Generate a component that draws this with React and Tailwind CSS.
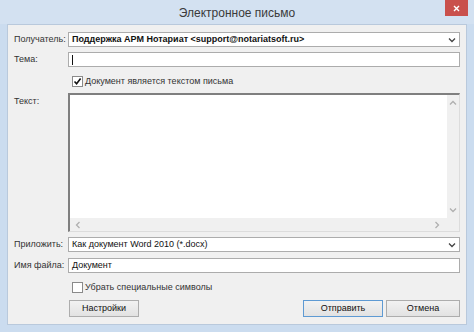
import React from 'react';

const font = { fontFamily: '"Liberation Sans", Arial, sans-serif' };

const Chevron = ({ dir = 'down', className = '' }) => {
  const d = {
    down: 'M1 2.5 L4 5.5 L7 2.5',
    up: 'M1 5.5 L4 2.5 L7 5.5',
    left: 'M5.5 1 L2.5 4 L5.5 7',
    right: 'M2.5 1 L5.5 4 L2.5 7',
  }[dir];
  return (
    <svg width="8" height="8" viewBox="0 0 8 8" className={className}>
      <path d={d} fill="none" stroke="currentColor" strokeWidth="1.3" />
    </svg>
  );
};

const Label = ({ children, top }) => (
  <div className={`w-[54px] shrink-0 text-[9px] text-[#333] ${top ? 'pt-[2px]' : 'flex items-center'}`}>
    {children}
  </div>
);

const Combo = ({ children, bold }) => (
  <div className="flex-1 h-[15px] bg-white border border-[#acacac] flex items-center pl-[3px] pr-[3px]">
    <span className={`flex-1 text-[9px] text-[#111] ${bold ? 'font-bold' : ''}`}>{children}</span>
    <Chevron className="text-[#444]" />
  </div>
);

const Checkbox = ({ checked, label }) => (
  <div className="flex items-center h-[11px] ml-[58px] gap-[2px]">
    <div className="w-[11px] h-[11px] bg-white border border-[#8a8a8a] flex items-center justify-center">
      {checked && (
        <svg width="9" height="9" viewBox="0 0 9 9">
          <path d="M1.5 4.5 L3.6 6.8 L7.6 1.6" fill="none" stroke="#111" strokeWidth="1.6" />
        </svg>
      )}
    </div>
    <span className="text-[9px] text-[#333]">{label}</span>
  </div>
);

const Button = ({ children, primary, className = '' }) => (
  <div
    className={`h-[17px] flex items-center justify-center text-[9px] text-[#111] bg-gradient-to-b from-[#f2f2f2] to-[#e2e2e2] border ${
      primary ? 'border-[#5e9ad3]' : 'border-[#adadad]'
    } ${className}`}
  >
    {children}
  </div>
);

export default function App() {
  return (
    <div className="w-[474px] h-[332px] bg-[#cbdcef] flex flex-col overflow-hidden" style={font}>
      <div className="h-[24px] flex items-start bg-[#d3e1f1]">
        <div className="w-[29px] shrink-0" />
        <div className="flex-1 text-center text-[12px] text-[#3a3a3a] pt-[4px]">Электронное письмо</div>
        <div className="w-[23px] h-[16px] shrink-0 bg-[#c9504c] flex items-center justify-center">
          <svg width="7" height="7" viewBox="0 0 7 7">
            <path d="M1 1 L6 6 M6 1 L1 6" stroke="#fff" strokeWidth="1.4" />
          </svg>
        </div>
        <div className="w-[6px] shrink-0" />
      </div>
      <div className="mx-[7px] mb-[7px] flex-1 bg-[#f0f0f0] border border-[#b9c9dc] pl-[6px] pr-[6px] pt-[7px] flex flex-col">
        <div className="flex h-[15px]">
          <Label>Получатель:</Label>
          <Combo bold>Поддержка АРМ Нотариат &lt;support@notariatsoft.ru&gt;</Combo>
        </div>
        <div className="flex h-[15px] mt-[5px]">
          <Label>Тема:</Label>
          <div className="flex-1 bg-white border border-[#acacac] flex items-center pl-[3px]">
            <div className="w-px h-[10px] bg-[#111]" />
          </div>
        </div>
        <div className="mt-[9px]">
          <Checkbox checked label="Документ является текстом письма" />
        </div>
        <div className="flex mt-[6px] h-[139px]">
          <Label top>Текст:</Label>
          <div className="flex-1 border-t-2 border-l-2 border-[#7f7f7f] border-r border-b border-r-[#dcdcdc] border-b-[#dcdcdc] bg-[#f0f0f0] flex flex-col">
            <div className="flex flex-1">
              <div className="flex-1 bg-white" />
              <div className="w-[12px] flex flex-col items-center justify-between py-[4px] text-[#b0b0b0]">
                <Chevron dir="up" />
                <Chevron dir="down" />
              </div>
            </div>
            <div className="h-[13px] flex items-center justify-between pl-[4px] pr-[18px] text-[#b0b0b0]">
              <Chevron dir="left" />
              <Chevron dir="right" />
            </div>
          </div>
        </div>
        <div className="flex h-[15px] mt-[5px]">
          <Label>Приложить:</Label>
          <Combo>Как документ Word 2010 (*.docx)</Combo>
        </div>
        <div className="flex h-[15px] mt-[6px]">
          <Label>Имя файла:</Label>
          <div className="flex-1 bg-white border border-[#acacac] flex items-center pl-[3px] text-[9px] text-[#111]">
            Документ
          </div>
        </div>
        <div className="mt-[9px]">
          <Checkbox label="Убрать специальные символы" />
        </div>
        <div className="flex mt-[7px] pl-[54px]">
          <Button className="w-[70px] ml-[1px]">Настройки</Button>
          <div className="flex-1" />
          <Button primary className="w-[80px]">Отправить</Button>
          <Button className="w-[74px] ml-[3px]">Отмена</Button>
        </div>
      </div>
    </div>
  );
}
